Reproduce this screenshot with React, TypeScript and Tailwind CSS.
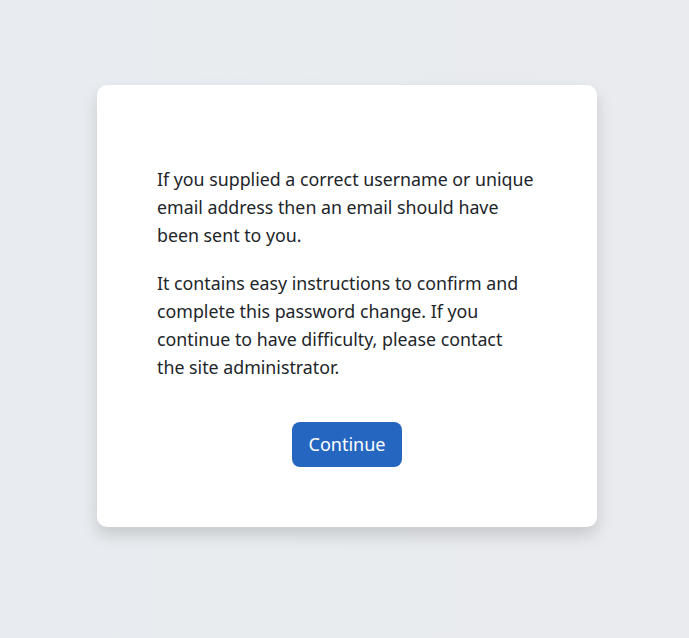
export default function App() {
  return (
    <div className="min-h-[638px] w-full bg-gradient-to-r from-[#e8ecf0] to-[#e9ebee] flex justify-center pl-[5px] pt-[85px] font-['Noto_Sans',sans-serif] text-[#212529]">
      <div className="w-[500px] h-[442px] bg-white rounded-[10px] shadow-[0_8px_16px_rgba(0,0,0,0.15)] px-[60px] pt-[80px] pb-[60px] box-border flex flex-col">
        <div className="text-[17.8px] leading-[28px]">
          <p className="mb-[20px]">
            If you supplied a correct username or unique<br />
            email address then an email should have<br />
            been sent to you.
          </p>
          <p className="mb-[19px]">
            It contains easy instructions to confirm and<br />
            complete this password change. If you<br />
            continue to have difficulty, please contact<br />
            the site administrator.
          </p>
        </div>
        <div className="flex justify-center mt-[22px]">
          <button className="w-[110px] h-[45px] rounded-[8px] bg-[#2567c0] text-white text-[18px]">
            Continue
          </button>
        </div>
      </div>
    </div>
  )
}
